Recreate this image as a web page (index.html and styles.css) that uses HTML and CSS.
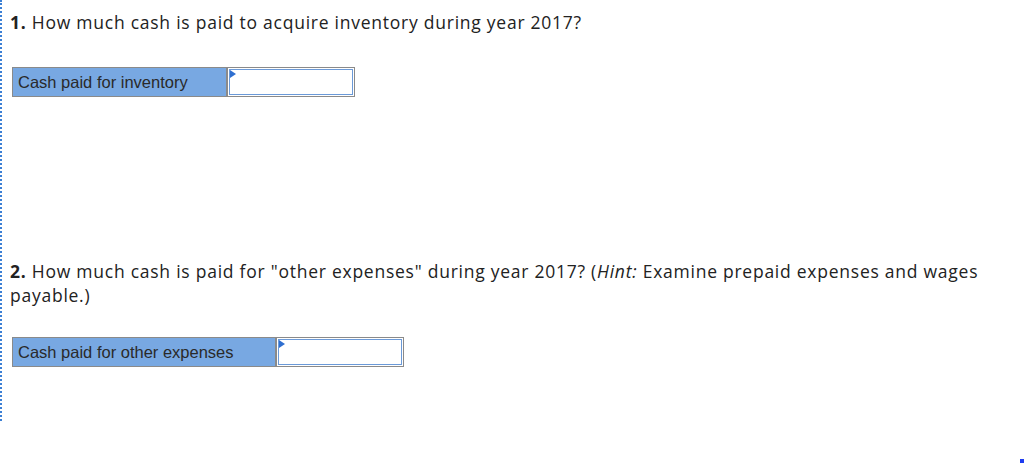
FILE: index.html
```html
<!DOCTYPE html>
<html>
<head>
<meta charset="utf-8">
<link rel="stylesheet" href="styles.css">
</head>
<body>
<div class="page">
  <div class="question q1">
    <p class="prompt"><b>1.</b> How much cash is paid to acquire inventory during year 2017?</p>
    <div class="answer w1">
      <div class="label">Cash paid for inventory</div>
      <div class="field"><span class="flag"></span><div class="input"></div></div>
    </div>
  </div>
  <div class="question q2">
    <p class="prompt"><b>2.</b> How much cash is paid for "other expenses" during year 2017? (<i>Hint:</i> Examine prepaid expenses and wages payable.)</p>
    <div class="answer w2">
      <div class="label">Cash paid for other expenses</div>
      <div class="field"><span class="flag"></span><div class="input"></div></div>
    </div>
  </div>
</div>
<div class="corner"></div>
</body>
</html>
```
FILE: styles.css
```css
html, body {
  margin: 0;
  padding: 0;
  background: #fff;
}
body {
  width: 1024px;
  height: 463px;
  position: relative;
  overflow: hidden;
}
.page {
  height: 421px;
  border-left: 2px dotted #3b7fd4;
  padding-left: 8px;
  padding-right: 30px;
  box-sizing: border-box;
  font-family: "Open Sans", Lato, sans-serif;
  color: #222;
}
.question {
  display: flex;
  flex-direction: column;
}
.q1 { padding-top: 10px; }
.q2 { padding-top: 162px; }
.prompt {
  margin: 0;
  font-size: 17.5px;
  letter-spacing: 0.75px;
  line-height: 24px;
}
.prompt b { font-weight: 700; }
.answer {
  display: flex;
  height: 30px;
  margin-left: 2px;
  box-sizing: border-box;
}
.q1 .answer { margin-top: 33px; }
.q2 .answer { margin-top: 30px; }
.label {
  background: #78a8e2;
  border: 1px solid #8a8a8a;
  border-right-width: 2px;
  box-sizing: border-box;
  font-family: "Liberation Sans", Arial, sans-serif;
  font-size: 16.5px;
  color: #2a2a2a;
  padding-left: 5px;
  display: flex;
  align-items: center;
}
.w1 .label { width: 216px; }
.w1 .field { width: 127px; }
.w2 .label { width: 265px; }
.w2 .field { width: 127px; }
.field {
  position: relative;
  border: 1px solid #8a8a8a;
  border-left: none;
  box-sizing: border-box;
  padding: 1px;
  background: #fff;
}
.input {
  height: 100%;
  border: 1px solid #6b9ad8;
  box-sizing: border-box;
}
.flag {
  position: absolute;
  left: 2px;
  top: 2px;
  width: 0;
  height: 0;
  border-top: 4px solid transparent;
  border-bottom: 4px solid transparent;
  border-left: 6px solid #2f6fd0;
}
.corner {
  position: absolute;
  left: 1020px;
  top: 459px;
  width: 4px;
  height: 4px;
  background: #1e3cf0;
}
```
